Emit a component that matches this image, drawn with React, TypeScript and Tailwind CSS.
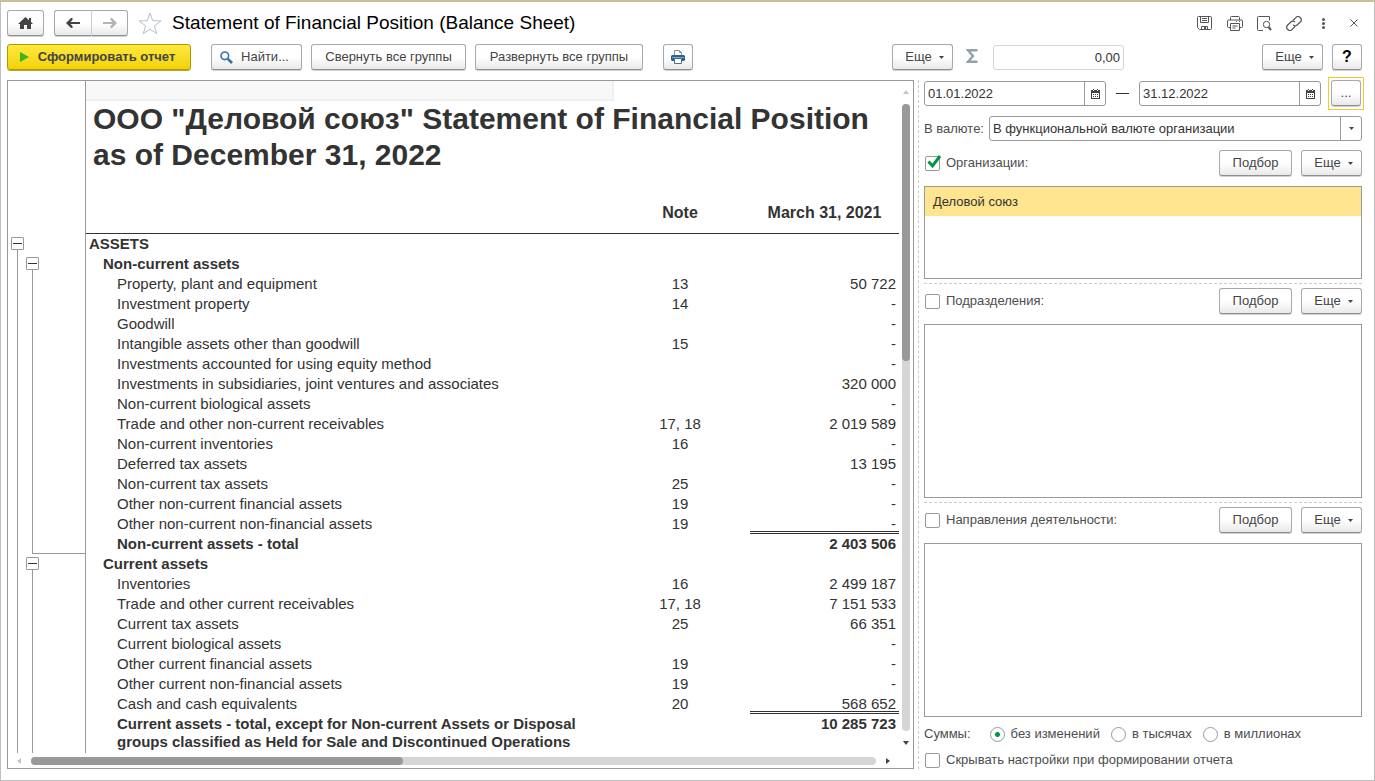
import React from "react";
import clsx from "clsx";

type Row = {
  title: string;
  note?: string;
  value?: string;
  level: 0 | 1 | 2;
  bold?: boolean;
  underlined?: boolean;
};

const rows: Row[] = [
  { title: "ASSETS", level: 0, bold: true },
  { title: "Non-current assets", level: 1, bold: true },
  { title: "Property, plant and equipment", note: "13", value: "50 722", level: 2 },
  { title: "Investment property", note: "14", value: "-", level: 2 },
  { title: "Goodwill", value: "-", level: 2 },
  { title: "Intangible assets other than goodwill", note: "15", value: "-", level: 2 },
  { title: "Investments accounted for using equity method", value: "-", level: 2 },
  { title: "Investments in subsidiaries, joint ventures and associates", value: "320 000", level: 2 },
  { title: "Non-current biological assets", value: "-", level: 2 },
  { title: "Trade and other non-current receivables", note: "17, 18", value: "2 019 589", level: 2 },
  { title: "Non-current inventories", note: "16", value: "-", level: 2 },
  { title: "Deferred tax assets", value: "13 195", level: 2 },
  { title: "Non-current tax assets", note: "25", value: "-", level: 2 },
  { title: "Other non-current financial assets", note: "19", value: "-", level: 2 },
  { title: "Other non-current non-financial assets", note: "19", value: "-", level: 2, underlined: true },
  { title: "Non-current assets - total", value: "2 403 506", level: 2, bold: true },
  { title: "Current assets", level: 1, bold: true },
  { title: "Inventories", note: "16", value: "2 499 187", level: 2 },
  { title: "Trade and other current receivables", note: "17, 18", value: "7 151 533", level: 2 },
  { title: "Current tax assets", note: "25", value: "66 351", level: 2 },
  { title: "Current biological assets", value: "-", level: 2 },
  { title: "Other current financial assets", note: "19", value: "-", level: 2 },
  { title: "Other current non-financial assets", note: "19", value: "-", level: 2 },
  { title: "Cash and cash equivalents", note: "20", value: "568 652", level: 2, underlined: true },
];

const Button = ({ className, children, ...props }: React.ComponentProps<"button">) => (
  <button
    type="button"
    className={clsx(
      "flex h-[26px] shrink-0 items-center justify-center rounded-[3px] border border-[#a9a9a9] border-b-[#8f8f8f] bg-linear-to-b from-white from-50% to-[#e9e9e9] whitespace-nowrap text-[#444] shadow-[0_1px_0_#d0d0d0]",
      className,
    )}
    {...props}
  >
    {children}
  </button>
);

const Caret = () => (
  <svg width="5" height="3" viewBox="0 0 5 3" fill="#444" aria-hidden="true">
    <path d="M0 0h5L2.5 3z" />
  </svg>
);

const MoreButton = () => (
  <Button className="w-[61px] gap-[7px] pl-1">
    Еще <Caret />
  </Button>
);

const CheckBox = ({ label, defaultChecked }: { label: string; defaultChecked?: boolean }) => (
  <label className="flex items-center gap-[5px]">
    <span className="relative flex px-px">
      <input
        type="checkbox"
        defaultChecked={defaultChecked}
        className="peer size-[15px] appearance-none rounded-[2px] border border-[#999] bg-white"
      />
      <svg
        className="pointer-events-none absolute -top-px left-[3px] hidden peer-checked:block"
        width="15"
        height="14"
        viewBox="0 0 15 14"
        fill="none"
        stroke="#009646"
        strokeWidth="3"
        aria-hidden="true"
      >
        <path d="M1.500 6.500l4 4.500L13 1" />
      </svg>
    </span>
    {label}
  </label>
);

const Radio = ({ label, defaultChecked }: { label: string; defaultChecked?: boolean }) => (
  <label className="flex items-center gap-[6px]">
    <input
      type="radio"
      name="amounts"
      defaultChecked={defaultChecked}
      className="size-[15px] appearance-none rounded-full border border-[#999] bg-white checked:bg-[radial-gradient(circle,#009646_2px,transparent_3px)]"
    />
    {label}
  </label>
);

const DateField = ({ label, value }: { label: string; value: string }) => (
  <div className="flex h-[25px] min-w-0 flex-1 rounded-[3px] border border-[#999]">
    <input
      type="text"
      aria-label={label}
      defaultValue={value}
      className="w-full min-w-0 flex-1 bg-transparent px-[3px] text-[#333] outline-none"
    />
    <button
      type="button"
      aria-label="Календарь"
      className="flex w-[21px] items-center justify-center border-l border-[#999]"
    >
      <svg width="9" height="10" viewBox="0 0 9 10" fill="#444" aria-hidden="true">
        <path d="M0 1h9v9H0zM1 4v5h7V4z" fillRule="evenodd" />
        <path d="M2 0h1v1H2zM6 0h1v1H6zM2 5h1v1H2zM4 5h1v1H4zM6 5h1v1H6zM2 7h1v1H2zM4 7h1v1H4zM6 7h1v1H6z" />
        <path d="M2 1h1v1H2zM6 1h1v1H6z" fill="#fff" />
      </svg>
    </button>
  </div>
);

const FilterSection = ({
  label,
  items = [],
  defaultChecked,
  className,
}: {
  label: string;
  items?: string[];
  defaultChecked?: boolean;
  className?: string;
}) => (
  <section className={clsx("flex flex-col", className)}>
    <div className="mb-[10px] flex items-center">
      <CheckBox label={label} defaultChecked={defaultChecked} />
      <Button className="ml-auto w-[73px]">Подбор</Button>
      <div className="ml-[9px]">
        <MoreButton />
      </div>
    </div>
    <ul className="flex-1 border border-[#999]">
      {items.map((item) => (
        <li key={item} className="bg-[#ffe58f] px-2 leading-[29px] text-[#333]">
          {item}
        </li>
      ))}
    </ul>
  </section>
);

const Collapse = ({ label }: { label: string }) => (
  <button
    type="button"
    aria-label={label}
    className="flex size-[13px] shrink-0 items-center justify-center rounded-[1px] border border-[#999]"
  >
    <span className="h-px w-[9px] bg-[#333]" />
  </button>
);

// brackets of the row groups, left of the report
const Outline = () => (
  <div className="flex w-[78px] shrink-0 border-r border-[#999] pl-[3px]">
    <div className="flex w-[15px] flex-col pt-[156px]">
      <Collapse label="ASSETS" />
      <div className="ml-[6px] flex-1 border-l border-[#999]" />
    </div>
    <div className="flex flex-1 flex-col pt-[176px]">
      <Collapse label="Non-current assets" />
      <div className="ml-[6px] h-[284px] border-b border-l border-[#999]" />
      <div className="h-[3px]" />
      <Collapse label="Current assets" />
      <div className="ml-[6px] flex-1 border-l border-[#999]" />
    </div>
  </div>
);

const Report = () => (
  <div className="min-w-0 flex-1">
    <div className="h-[20px] w-[528px] border-r-2 border-b-2 border-[#f0f0f0] bg-[#f8f8f8]" />
    <h2 className="pl-[7px] text-[30px] leading-[36px] font-bold">
      ООО "Деловой союз" Statement of Financial Position
      <br />
      as of December 31, 2022
    </h2>
    <table className="w-full table-fixed border-separate border-spacing-0 text-[15px] leading-5">
      <colgroup>
        <col />
        <col className="w-[140px]" />
        <col className="w-[149px]" />
      </colgroup>
      <thead>
        <tr className="h-[61px] align-bottom text-base leading-5">
          <td className="border-b border-[#333]" />
          <th className="border-b border-[#333] pb-[10px]">Note</th>
          <th className="border-b border-[#333] pb-[10px]">March 31, 2021</th>
        </tr>
      </thead>
      <tbody>
        {rows.map((row) => (
          <tr key={row.title} className={clsx("h-5", row.bold && "font-bold")}>
            <td
              className={clsx(
                row.level === 0 && "pl-[3px]",
                row.level === 1 && "pl-[17px]",
                row.level === 2 && "pl-[31px]",
              )}
            >
              {row.title}
            </td>
            <td className="text-center">{row.note}</td>
            <td
              className={clsx(
                "pr-[3px] text-right",
                row.underlined && "border-b-3 border-double border-[#333] pt-[2px] leading-[15px]",
              )}
            >
              {row.value}
            </td>
          </tr>
        ))}
        <tr className="align-top leading-[18px] font-bold">
          <td className="pt-px pl-[31px]">
            Current assets - total, except for Non-current Assets or Disposal
            <br />
            groups classified as Held for Sale and Discontinued Operations
          </td>
          <td />
          <td className="pt-px pr-[3px] text-right">10 285 723</td>
        </tr>
      </tbody>
    </table>
  </div>
);

const Toolbar = () => (
  <div className="flex items-start">
    <button
      type="button"
      className="flex h-[26px] w-[184px] items-center justify-center gap-[9px] rounded-[3px] border border-[#b09a00] bg-linear-to-b from-[#ffe93b] to-[#f2d200] pr-[3px] font-bold whitespace-nowrap text-[#444] shadow-[0_1px_0_#b5a642]"
    >
      <svg width="9" height="10" viewBox="0 0 9 10" fill="#3cb51f" aria-hidden="true">
        <path d="M0 0l9 5-9 5z" />
      </svg>
      Сформировать отчет
    </button>
    <Button className="ml-5 w-[91px] gap-2 pr-1">
      <svg width="13" height="13" viewBox="0 0 13 13" fill="none" stroke="#2e75a8" aria-hidden="true">
        <circle cx="4.800" cy="4.800" r="3.800" strokeWidth="1.600" />
        <path d="M7.800 7.800l4.200 4.200" strokeWidth="2.600" />
      </svg>
      Найти...
    </Button>
    <Button className="ml-[9px] w-[155px]">Свернуть все группы</Button>
    <Button className="ml-[9px] w-[168px]">Развернуть все группы</Button>
    <Button className="ml-5 w-[30px]" aria-label="Печать">
      <svg width="14" height="14" viewBox="0 0 14 14" aria-hidden="true">
        <path d="M3.500 6V.5h5l2 2V6" fill="#fff" stroke="#7f93a8" />
        <path d="M8.500.5v2h2" fill="none" stroke="#7f93a8" />
        <path d="M1 5h12l1 1v4l-1 1H1l-1-1V6z" fill="#2f618f" />
        <path d="M1 7h12v1H1z" fill="#7ea6c8" />
        <path d="M3.500 8.500h7v5h-7z" fill="#fff" stroke="#4a6f92" />
      </svg>
    </Button>
    <div className="ml-auto flex items-start">
      <MoreButton />
      <svg className="mt-[5px] ml-[13px]" width="12" height="14" viewBox="0 0 12 14" fill="none" stroke="#93a1ac" strokeWidth="2.400" aria-hidden="true">
        <path d="M11.500 1.200H2L7 7l-5 5.800h9.500" />
      </svg>
      <input
        type="text"
        aria-label="Сумма"
        defaultValue="0,00"
        className="mt-px ml-[15px] h-[25px] w-[131px] rounded-[3px] border border-[#d5d5d5] px-[3px] text-right text-[#333] outline-none"
      />
    </div>
    <div className="ml-[138px] flex gap-[9px]">
      <MoreButton />
      <Button className="w-[30px] text-base font-bold text-black">?</Button>
    </div>
  </div>
);

const TitleBar = () => (
  <header className="flex items-center">
    <Button className="h-[24px] w-[37px]" aria-label="Домой">
      <svg width="15" height="12" viewBox="0 0 15 12" fill="#444" aria-hidden="true">
        <path d="M7.500 0L11 3.200V1h2v4l2 2h-2v5H9V8H6v4H2V7H0z" />
      </svg>
    </Button>
    <div className="ml-[10px] flex">
      <Button className="h-[24px] w-[38px] rounded-r-none border-r-[#ccc]" aria-label="Назад">
        <svg width="14" height="10" viewBox="0 0 14 10" fill="#444" aria-hidden="true">
          <path d="M0 5L5 0h1.500v2L4.500 4H14v2H4.500l2 2v2H5z" />
        </svg>
      </Button>
      <Button className="h-[24px] w-[36px] rounded-l-none border-l-0" aria-label="Вперед">
        <svg width="14" height="10" viewBox="0 0 14 10" fill="#b3b3b3" aria-hidden="true">
          <path d="M14 5L9 0H7.500v2l2 2H0v2h9.500l-2 2v2H9z" />
        </svg>
      </Button>
    </div>
    <button type="button" className="ml-[10px]" aria-label="В избранное">
      <svg width="24" height="23" viewBox="0 0 24 23" fill="none" stroke="#b9bfc4" aria-hidden="true">
        <path d="M12 1l2.700 7.700 8.200.2-6.500 5 2.300 7.800L12 17l-6.700 4.700 2.300-7.800-6.500-5 8.200-.2z" />
      </svg>
    </button>
    <h1 className="ml-[10px] text-[19px] leading-6 text-black">
      Statement of Financial Position (Balance Sheet)
    </h1>
    <div className="ml-auto flex items-center pr-[4px]">
      <button type="button" aria-label="Сохранить">
        <svg width="15" height="14" viewBox="0 0 15 14" fill="none" stroke="#555" aria-hidden="true">
          <path d="M.5 1.500a1 1 0 0 1 1-1h12a1 1 0 0 1 1 1v11a1 1 0 0 1-1 1h-11l-2-2z" />
          <path d="M3.500.5v6h8v-6M5 2.500h5M5 4.500h5M4.500 13.500v-3h6v3" />
          <path d="M7 11h2v2H7z" fill="#555" stroke="none" />
        </svg>
      </button>
      <button type="button" className="ml-[15px]" aria-label="Печать">
        <svg width="16" height="15" viewBox="0 0 16 15" fill="none" stroke="#555" aria-hidden="true">
          <path d="M3.500 4V1.500a1 1 0 0 1 1-1h7a1 1 0 0 1 1 1V4M3.500 11.500h-2a1 1 0 0 1-1-1V5a1 1 0 0 1 1-1h13a1 1 0 0 1 1 1v5.500a1 1 0 0 1-1 1h-2" />
          <path d="M3.500 7.500h9v7h-9zM5.500 10h5M5.500 12h3M9 5.500h1M12 5.500h1" />
        </svg>
      </button>
      <button type="button" className="ml-[14px]" aria-label="Просмотр">
        <svg width="15" height="15" viewBox="0 0 15 15" fill="none" stroke="#555" aria-hidden="true">
          <path d="M6 14.500H1.500a1 1 0 0 1-1-1v-12a1 1 0 0 1 1-1h11v4" />
          <circle cx="9.500" cy="8.500" r="3.200" />
          <path d="M11.500 11l2.500 3" strokeWidth="2" />
        </svg>
      </button>
      <button type="button" className="ml-[14px]" aria-label="Ссылка">
        <svg width="16" height="15" viewBox="0 0 16 15" fill="none" stroke="#555" strokeWidth="1.200" aria-hidden="true">
          <path d="M7 4.500l2.800-2.900a3 3 0 0 1 4.500 4.400l-3.500 3.300a2.500 2.500 0 0 1-3.800-.5" />
          <path d="M9 10.500l-2.800 2.900A3 3 0 0 1 1.700 9l3.500-3.300a2.500 2.500 0 0 1 3.800.5" />
        </svg>
      </button>
      <button type="button" className="ml-[20px]" aria-label="Меню">
        <svg width="3" height="11" viewBox="0 0 3 11" fill="#555" aria-hidden="true">
          <circle cx="1.500" cy="1.500" r="1.500" />
          <circle cx="1.500" cy="5.500" r="1.500" />
          <circle cx="1.500" cy="9.500" r="1.500" />
        </svg>
      </button>
      <button type="button" className="ml-[25px]" aria-label="Закрыть">
        <svg width="8" height="8" viewBox="0 0 8 8" stroke="#555" aria-hidden="true">
          <path d="M.5.5l7 7M7.500.5l-7 7" />
        </svg>
      </button>
    </div>
  </header>
);

const Settings = () => (
  <aside className="flex w-[438px] shrink-0 flex-col">
    <div className="flex items-start">
      <div className="mt-px flex min-w-0 flex-1 items-center">
        <DateField label="Начало периода" value="01.01.2022" />
        <span className="mx-[10px] h-px w-[13px] bg-[#333]" />
        <DateField label="Конец периода" value="31.12.2022" />
      </div>
      <div className="-mt-[3px] -mr-[2px] ml-[7px] border border-[#f5c92b] p-[2px] pb-[3px]">
        <Button className="w-[30px]" aria-label="Выбрать период">
          ...
        </Button>
      </div>
    </div>
    <div className="mt-[6px] flex items-center gap-[5px]">
      <label htmlFor="currency">В валюте:</label>
      <div className="relative h-[25px] flex-1 rounded-[3px] border border-[#999]">
        <select id="currency" className="size-full appearance-none bg-transparent px-[3px] pr-6 text-[#333] outline-none">
          <option>В функциональной валюте организации</option>
        </select>
        <span className="pointer-events-none absolute inset-y-0 right-0 flex w-[21px] items-center justify-center border-l border-[#999]">
          <Caret />
        </span>
      </div>
    </div>
    <FilterSection
      label="Организации:"
      items={["Деловой союз"]}
      defaultChecked
      className="mt-[9px] h-[129px] shrink-0"
    />
    <hr className="mt-[4px] border-dashed border-[#ccc]" />
    <FilterSection label="Подразделения:" className="mt-[4px] flex-1" />
    <hr className="mt-[4px] border-dashed border-[#ccc]" />
    <FilterSection label="Направления деятельности:" className="mt-[4px] flex-1" />
    <fieldset className="mt-[7px] flex items-center gap-[11px]">
      <legend className="float-left mr-[8px]">Суммы:</legend>
      <Radio label="без изменений" defaultChecked />
      <Radio label="в тысячах" />
      <Radio label="в миллионах" />
    </fieldset>
    <div className="mt-[7px] leading-[18px]">
      <CheckBox label="Скрывать настройки при формировании отчета" />
    </div>
  </aside>
);

export default function App() {
  return (
    <div className="flex min-h-screen flex-col border border-[#bfbfbf] bg-white pr-[12px] pb-[11px] pl-[6px] font-['Liberation_Sans',Arial,sans-serif] text-[13px] leading-5 text-[#4d4d4d]">
      <div className="-mr-[12px] -ml-[6px] h-px bg-[#d1bf6b]" />
      <div className="mt-2">
        <TitleBar />
      </div>
      <div className="mt-2">
        <Toolbar />
      </div>
      <main className="mt-[10px] flex flex-1">
        <div className="flex min-w-0 flex-1 flex-col border border-[#999] text-[#333]">
          <div className="flex flex-1">
            <Outline />
            <Report />
            <div className="flex w-[14px] shrink-0 flex-col items-center pt-[9px]">
              <svg width="6" height="4" viewBox="0 0 6 4" fill="#c4c4c4" aria-hidden="true">
                <path d="M3 0l3 4H0z" />
              </svg>
              <div className="mt-[10px] mb-[10px] w-[8px] flex-1 rounded-full bg-[#d5d5d5]">
                <div className="h-[41%] rounded-full bg-[#999]" />
              </div>
              <svg className="mb-[8px]" width="6" height="4" viewBox="0 0 6 4" fill="#444" aria-hidden="true">
                <path d="M0 0h6L3 4z" />
              </svg>
            </div>
          </div>
          <div className="flex h-[15px] items-center pr-[23px] pl-[9px]">
            <svg width="4" height="6" viewBox="0 0 4 6" fill="#c4c4c4" aria-hidden="true">
              <path d="M4 0v6L0 3z" />
            </svg>
            <div className="mx-[10px] h-[8px] flex-1 rounded-full bg-[#d5d5d5]">
              <div className="h-full w-[44%] rounded-full bg-[#999]" />
            </div>
            <svg width="4" height="6" viewBox="0 0 4 6" fill="#444" aria-hidden="true">
              <path d="M0 0v6l4-3z" />
            </svg>
          </div>
        </div>
        <div className="mr-[5px] ml-[4px] border-l border-dashed border-[#ccc]" />
        <Settings />
      </main>
    </div>
  );
}
